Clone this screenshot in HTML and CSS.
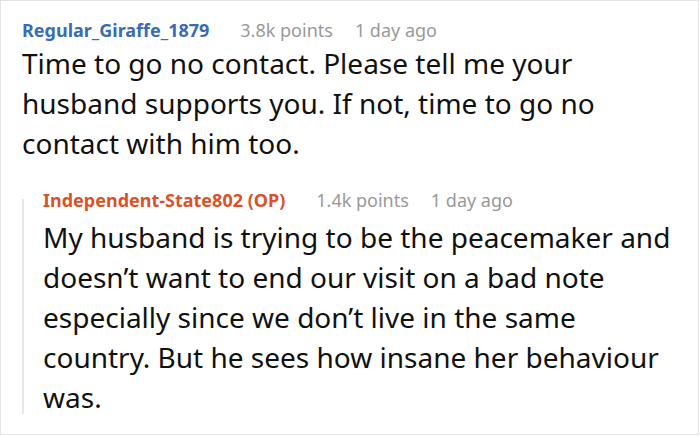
FILE: index.html
```html
<!DOCTYPE html>
<html>
<head>
<meta charset="utf-8">
<link rel="stylesheet" href="styles.css">
</head>
<body>
<div class="card">
  <div class="comment">
    <div class="meta">
      <span class="user user-blue">Regular_Giraffe_1879</span>
      <span class="info">3.8k points</span>
      <span class="info">1 day ago</span>
    </div>
    <p class="text">Time to go no contact. Please tell me your husband supports you. If not, time to go no contact with him too.</p>
    <div class="reply">
      <div class="meta">
        <span class="user user-orange">Independent-State802 (OP)</span>
        <span class="info">1.4k points</span>
        <span class="info">1 day ago</span>
      </div>
      <p class="text">My husband is trying to be the peacemaker and doesn’t want to end our visit on a bad note especially since we don’t live in the same country. But he sees how insane her behaviour was.</p>
    </div>
  </div>
</div>
</body>
</html>
```
FILE: styles.css
```css
html, body {
  margin: 0;
  padding: 0;
  background: #ffffff;
}
body {
  font-family: "Noto Sans", "Open Sans", sans-serif;
}
.card {
  box-sizing: border-box;
  width: 699px;
  height: 435px;
  border: 1px solid #e3e3e3;
  padding: 16px 8px 0 21px;
  overflow: hidden;
}
.meta {
  display: flex;
  gap: 22px;
  font-size: 18px;
  line-height: 26px;
}
.user {
  font-weight: bold;
  margin-right: 9px;
}
.user-blue { color: #3b6bb4; }
.user-orange { color: #d8532a; }
.info { color: #999999; }
.text {
  margin: 0;
  font-size: 28px;
  line-height: 40px;
  color: #111111;
}
.reply {
  position: relative;
  margin-top: 24px;
  padding-left: 21px;
}
.reply::before {
  content: "";
  position: absolute;
  left: 0;
  top: 12px;
  bottom: 3px;
  width: 2px;
  background: #e8e8e8;
}
.reply .text {
  margin-top: 4px;
}
```
